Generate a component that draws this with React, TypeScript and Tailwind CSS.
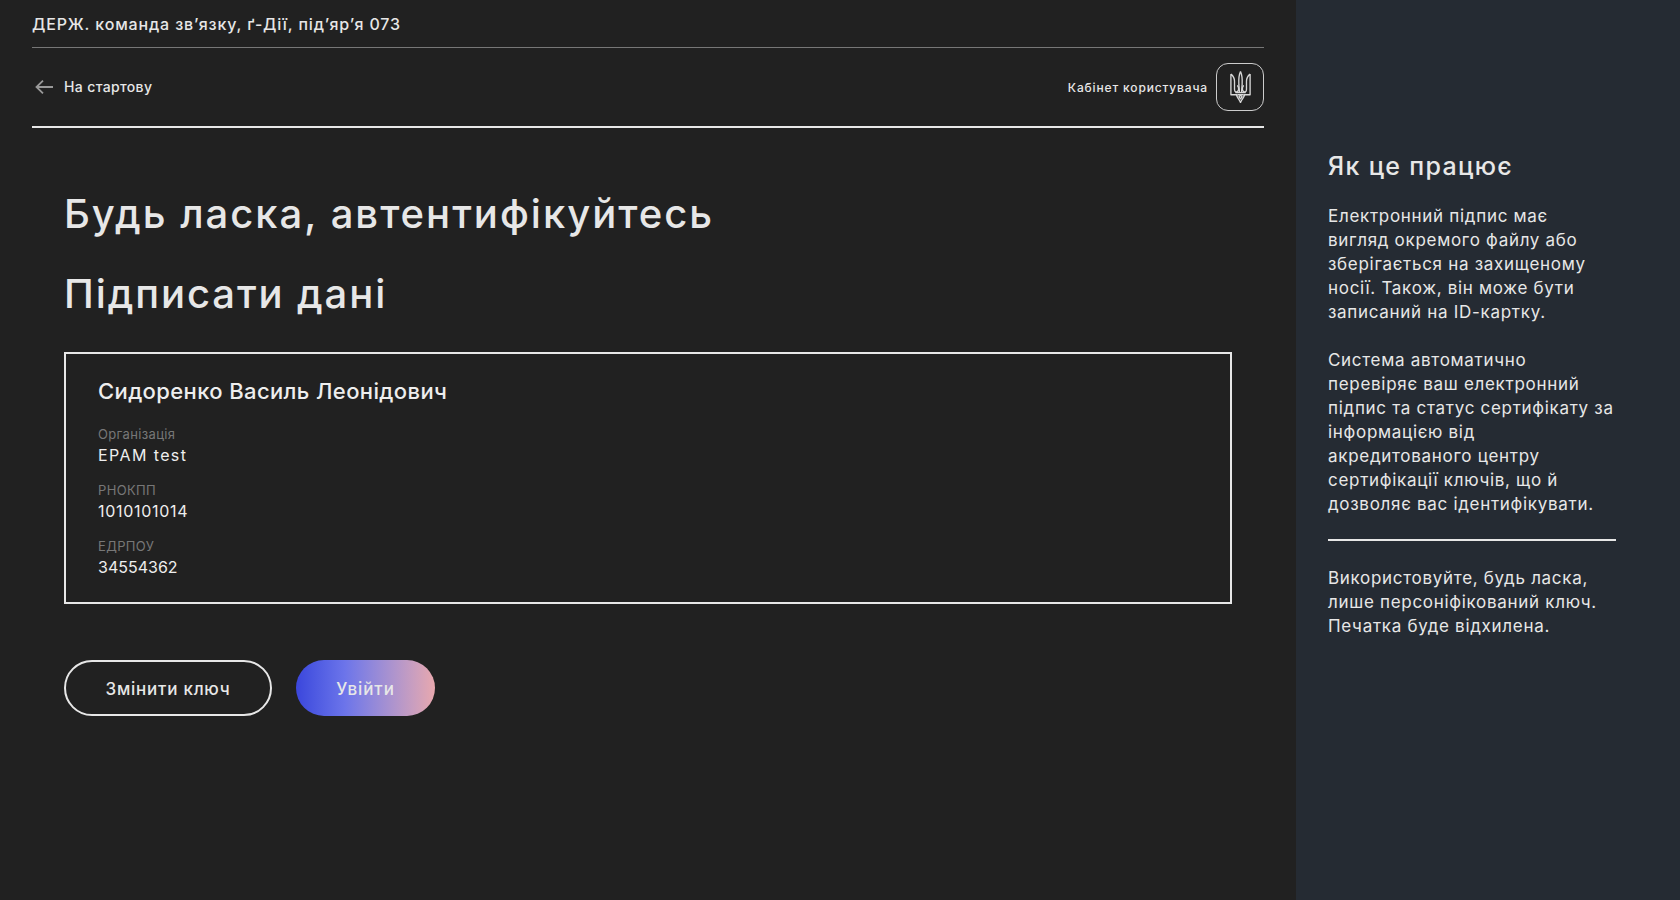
function Trident() {
  return (
    <svg width="21" height="32" viewBox="0 0 20 31" fill="none" stroke="#d8d8d8" strokeWidth="1.3" strokeLinejoin="round">
      <path d="M10 0.5C8.6 3.5 8 6 8.4 13L9 20.5M10 0.5C11.4 3.5 12 6 11.6 13L11 20.5" />
      <path d="M0.7 3V23H7M0.7 3C3.4 5 4.2 7 4.2 10V18C4.2 20.6 6.4 21 7.6 19.4C8.6 17.8 8.2 14.4 6.6 14.2" />
      <path d="M19.3 3V23H13M19.3 3C16.6 5 15.8 7 15.8 10V18C15.8 20.6 13.6 21 12.4 19.4C11.4 17.8 11.8 14.4 13.4 14.2" />
      <path d="M6 23C6.6 26 8.8 27 10 30.5C11.2 27 13.4 26 14 23M5 21H15M7 23H13" />
      <path d="M8.5 25L10 23.5L11.5 25L10 27Z" />
    </svg>
  );
}

function Field({ label, value, tracking }: { label: string; value: string; tracking: string }) {
  return (
    <div className="mt-[15px] first:mt-0">
      <div className="text-[13px] leading-[17px] tracking-[0.35px] text-[#777777]">{label}</div>
      <div className={`text-[16px] leading-6 text-[#eeeeee] ${tracking}`}>{value}</div>
    </div>
  );
}

export default function App() {
  return (
    <div className="flex h-[900px] overflow-hidden bg-[#212121] font-['Inter',sans-serif] text-[#e7e7e7]">
      <main className="w-[1296px] shrink-0 px-8">
        <div className="flex h-[48px] items-center border-b border-[#777777] text-[16px] font-medium tracking-[0.85px]">
          ДЕРЖ. команда зв’язку, ґ-Дії, під’яр’я 073
        </div>
        <div className="flex h-[80px] items-center justify-between border-b-2 border-[#e7e7e7]">
          <div className="flex items-center">
            <svg width="18" height="14" viewBox="0 0 18 14" fill="none" stroke="#999999" strokeWidth="1.8" className="ml-[3px]">
              <path d="M18 7H1.5M8 0.7L1.5 7L8 13.3" />
            </svg>
            <span className="mb-[2px] ml-[11px] text-[14px] font-medium tracking-[0.36px]">На стартову</span>
          </div>
          <div className="flex items-center">
            <span className="mr-2 mt-[2px] text-[12px] font-medium tracking-[0.85px]">Кабінет користувача</span>
            <div className="flex h-12 w-12 items-center justify-center rounded-xl border border-[#cccccc]">
              <Trident />
            </div>
          </div>
        </div>
        <div className="px-8">
          <h1 className="mt-[58px] text-[40px] font-medium leading-[56px] tracking-[2px]">Будь ласка, автентифікуйтесь</h1>
          <h2 className="mt-6 text-[40px] font-medium leading-[56px] tracking-[1.9px]">Підписати дані</h2>
          <div className="mt-[30px] h-[252px] border-2 border-[#e7e7e7] px-8 pt-[21px]">
            <div className="text-[22px] font-medium leading-8 tracking-[0.38px] text-[#eeeeee]">Сидоренко Василь Леонідович</div>
            <div className="mt-[19px]">
              <Field label="Організація" value="EPAM test" tracking="tracking-[1.4px]" />
              <Field label="РНОКПП" value="1010101014" tracking="tracking-[0.7px]" />
              <Field label="ЕДРПОУ" value="34554362" tracking="tracking-normal" />
            </div>
          </div>
          <div className="mt-14 flex gap-6">
            <button className="h-14 w-[208px] rounded-[28px] border-2 border-[#e7e7e7] pt-[3px] text-[17px] font-medium tracking-[0.75px]">
              Змінити ключ
            </button>
            <button className="h-14 w-[139px] rounded-[28px] bg-gradient-to-r from-[#3b46dc] via-[#6c74ea] via-35% to-[#e8a8ae] pt-[3px] text-[17px] font-medium tracking-[0.9px]">
              Увійти
            </button>
          </div>
        </div>
      </main>
      <aside className="flex-1 bg-[#252b33] pl-8 pr-16 pt-[146px] text-[17px] leading-6 tracking-[0.7px]">
        <h3 className="text-[25px] font-medium leading-10 tracking-[1.3px]">Як це працює</h3>
        <p className="mt-[18px]">
          Електронний підпис має
          <br />
          вигляд окремого файлу або зберігається на захищеному носії. Також, він може бути записаний на ID-картку.
        </p>
        <p className="mt-6">
          Система автоматично перевіряє ваш електронний підпис та статус сертифікату за інформацією від акредитованого
          центру сертифікації ключів, що й дозволяє вас ідентифікувати.
        </p>
        <div className="mb-[25px] mt-[23px] h-[2px] bg-[#e7e7e7]" />
        <p>Використовуйте, будь ласка, лише персоніфікований ключ. Печатка буде відхилена.</p>
      </aside>
    </div>
  );
}
